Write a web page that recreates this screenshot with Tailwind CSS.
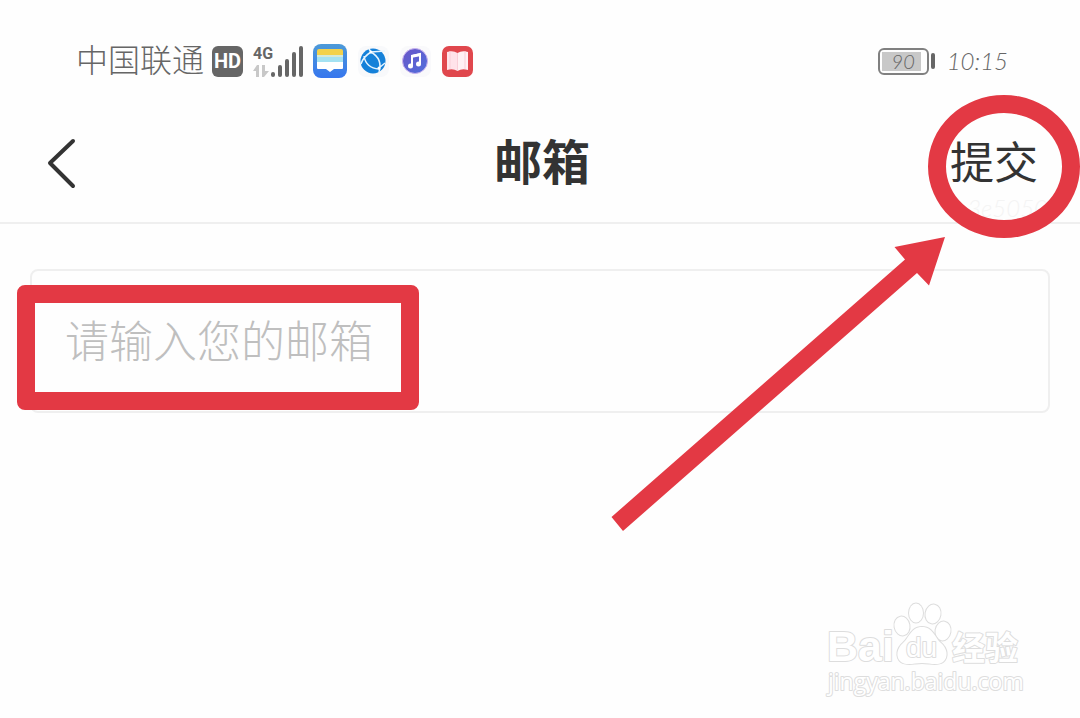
<!DOCTYPE html>
<html lang="zh-CN">
<head>
    <meta charset="UTF-8">
    <meta name="viewport" content="width=device-width, initial-scale=1.0">
    <title>邮箱</title>
    <script src="https://cdn.jsdelivr.net/npm/@tailwindcss/browser@4"></script>
</head>
<body class="relative flex flex-col min-h-screen overflow-x-hidden bg-[#fefefe] text-[#333333] font-['Liberation_Sans','Noto_Sans_CJK_SC',sans-serif]">

<!-- Status bar -->
<div class="flex items-center justify-between mt-9 h-[50px] pl-[76px] pr-[72px] text-[#666666]">
    <div class="flex items-center">
        <span class="text-[32px] leading-[48px] font-light mr-2">中国联通</span>
        <span class="flex items-center justify-center w-[31px] h-[31px] mr-2.5 rounded-md bg-[#666666] text-white text-xl leading-6 font-bold font-[Roboto,sans-serif]">HD</span>
        <svg class="w-[51px] h-9 mr-[9px]" viewBox="0 0 51 36" fill="#666666">
            <text x="0" y="16" font-family="Roboto, sans-serif" font-size="16" font-weight="700">4G</text>
            <path d="M0 28l4-6h2v12H3v-6zM9 22h3v6h4l-5 6H9z" fill="#c8c8c8"/>
            <rect x="18" y="29" width="4" height="5" rx="2"/>
            <rect x="25" y="22" width="4" height="12" rx="2"/>
            <rect x="32" y="16" width="4" height="18" rx="2"/>
            <rect x="39" y="9" width="4" height="25" rx="2"/>
            <rect x="46" y="3" width="4" height="31" rx="2"/>
        </svg>
        <div class="flex items-center gap-[11px]">
            <svg class="w-[34px] h-[34px]" viewBox="0 0 34 34">
                <defs>
                    <linearGradient id="wallet" x1="0" y1="0" x2="0" y2="1">
                        <stop offset="0" stop-color="#4d9ad8"/>
                        <stop offset="1" stop-color="#3676ee"/>
                    </linearGradient>
                </defs>
                <rect width="34" height="34" rx="8" fill="url(#wallet)"/>
                <path d="M6 5h22a2 2 0 0 1 2 2v5H4V7a2 2 0 0 1 2-2z" fill="#f2d14b"/>
                <rect x="4" y="11" width="26" height="3" fill="#d5e9d8"/>
                <rect x="4" y="13" width="26" height="6" fill="#a4e2f2"/>
                <path d="M4 18h26v6q0 1-1 1h-8l-4 3-4-3H5q-1 0-1-1z" fill="#ffffff"/>
            </svg>
            <svg class="w-[31px] h-[31px]" viewBox="0 0 31 31">
                <rect width="31" height="31" rx="8" fill="#f8f9fb"/>
                <circle cx="15" cy="15" r="12.5" fill="#1581d9"/>
                <g fill="none" stroke="#e6f4ff" stroke-width="1.5">
                    <path d="M13 6Q5 11 3 18M13 6q12 7 8 20M6 10q2 12 15 13M11 3l2 3 14-1M21 22l6-5"/>
                </g>
                <g fill="#ffffff">
                    <circle cx="13" cy="6" r="1.5"/>
                    <circle cx="21" cy="22" r="1.5"/>
                </g>
            </svg>
            <svg class="w-[31px] h-[31px]" viewBox="0 0 31 31">
                <defs>
                    <linearGradient id="music" x1="0" y1="0" x2="1" y2="1">
                        <stop offset="0" stop-color="#6a55c8"/>
                        <stop offset="1" stop-color="#4f6fdc"/>
                    </linearGradient>
                </defs>
                <rect width="31" height="31" rx="8" fill="#f9f9fb"/>
                <circle cx="15" cy="15" r="12.5" fill="url(#music)" stroke="#c9b2ee" stroke-width="1"/>
                <path d="M12 20V10l8-2v10" fill="none" stroke="#ffffff" stroke-width="2"/>
                <path d="M11 9l10-2v3l-10 2z" fill="#ffffff"/>
                <circle cx="10.5" cy="20" r="2.5" fill="#ffffff"/>
                <circle cx="18.5" cy="18" r="2.5" fill="#ffffff"/>
            </svg>
            <svg class="w-[31px] h-[31px]" viewBox="0 0 31 31">
                <rect width="31" height="31" rx="7" fill="#e0474d"/>
                <path d="M5 6q6-2 10.5 1v18Q11 22 5 24z" fill="#ffe3ea"/>
                <path d="M26 6q-6-2-10.5 1v18q4.500-3 10.500-1z" fill="#fff1f4"/>
                <path d="M8 5v18M23 5v18M15.500 7v18" fill="none" stroke="#f9cfd8"/>
            </svg>
        </div>
    </div>
    <div class="flex items-center font-[Lato,sans-serif] italic font-light">
        <div class="relative flex items-center justify-center w-[51px] h-[27px] border-2 border-[#808080] rounded-md">
            <div class="absolute left-0.5 inset-y-0.5 w-[39px] bg-[#c8c8c8]"></div>
            <span class="relative text-xl leading-6">90</span>
        </div>
        <div class="w-1 h-4 ml-0.5 mr-3 rounded-sm bg-[#666666]"></div>
        <span class="text-2xl leading-8">10:15</span>
    </div>
</div>

<!-- Header -->
<header class="relative grid grid-cols-3 items-center h-[138px] pt-5 pl-[46px] pr-[42px] border-b-2 border-[#efefef]">
    <button type="button" aria-label="返回" class="justify-self-start">
        <svg class="w-8 h-[52px]" viewBox="0 0 32 52" fill="none" stroke="#333333" stroke-width="4" stroke-linecap="round" stroke-linejoin="round">
            <path d="M27 3L4 25l23 23"/>
        </svg>
    </button>
    <h1 class="justify-self-center text-5xl font-bold">邮箱</h1>
    <button type="submit" form="emailForm" class="justify-self-end text-[44px] leading-[64px] whitespace-nowrap">提交</button>
    <span class="absolute right-8 bottom-0 text-2xl leading-7 italic font-light font-[Lato,sans-serif] text-[#f4f4f4]">3e5050</span>
    <!-- Marker round the submit button -->
    <div class="absolute right-0 top-[9px] w-[152px] h-[143px] border-[18px] border-[#e33944] rounded-[50%] pointer-events-none"></div>
</header>

<!-- Email form -->
<main class="px-[30px] pt-[45px]">
    <form id="emailForm" class="relative">
        <input type="email" id="email" aria-label="邮箱" placeholder="请输入您的邮箱" class="block w-full h-[144px] pt-1 pl-[33px] pr-8 border-2 border-[#efefef] rounded-lg bg-transparent text-[44px] font-light placeholder:text-[#bfbfbf] outline-none">
        <!-- Marker round the placeholder -->
        <div class="absolute -left-[13px] top-4 w-[402px] h-[125px] border-[18px] border-[#e33944] rounded-lg pointer-events-none"></div>
    </form>
</main>

<!-- Arrow to the submit button -->
<svg class="absolute right-[134px] top-[236px] w-[335px] h-[296px] pointer-events-none" viewBox="0 0 335 296" fill="#e33944">
    <path d="M0.500 281L294 23.500 283.500 11 334 1 318 49.500 306 37 12 295z"/>
</svg>

<!-- Watermark -->
<footer class="mt-auto flex justify-end pr-[56px] pb-5">
    <svg class="w-[200px] h-[98px]" viewBox="0 0 200 98" fill="#ffffff" stroke="#dddddd" stroke-width="2" stroke-linejoin="round" paint-order="stroke">
        <text x="3" y="61" font-family="Liberation Sans, sans-serif" font-size="43" font-weight="700">Bai</text>
        <ellipse cx="78" cy="26" rx="7.5" ry="9.5" transform="rotate(-10 78 26)"/>
        <ellipse cx="92" cy="13" rx="7" ry="9.5"/>
        <ellipse cx="109" cy="14" rx="7.5" ry="9.5" transform="rotate(10 109 14)"/>
        <ellipse cx="119" cy="31" rx="7.5" ry="9.5" transform="rotate(10 119 31)"/>
        <path d="M98 27c-11 0-13 11-19 16-6 5-8 14-2 19 6 4 13 1 21 1s15 3 21-1c6-5 4-14-2-19-6-5-8-16-19-16z"/>
        <text x="82" y="57" font-family="Liberation Sans, sans-serif" font-size="28">du</text>
        <text x="128" y="60" font-family="Noto Sans CJK SC, sans-serif" font-size="33" font-weight="700">经验</text>
        <text x="4" y="90" font-family="Open Sans, sans-serif" font-size="23">jingyan.baidu.com</text>
    </svg>
</footer>

</body>
</html>
